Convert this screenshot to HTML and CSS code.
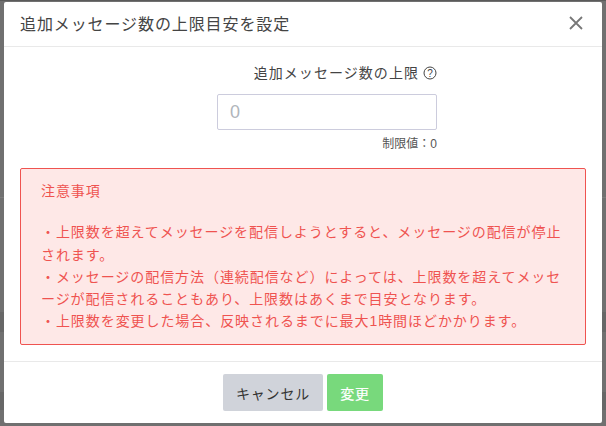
FILE: index.html
```html
<!DOCTYPE html>
<html lang="ja">
<head>
  <meta charset="utf-8">
  <title>追加メッセージ数の上限目安を設定</title>
  <link rel="stylesheet" href="styles.css">
</head>
<body>
  <div class="modal">
    <div class="modal-header">
      <h2 class="modal-title">追加メッセージ数の上限目安を設定</h2>
      <svg class="close-icon" width="16" height="16" viewBox="0 0 16 16"><path d="M2 2 L14 14 M14 2 L2 14" /></svg>
    </div>
    <div class="modal-body">
      <div class="limit-form">
        <label class="limit-label">追加メッセージ数の上限
          <svg class="help-icon" width="14" height="14" viewBox="0 0 14 14"><circle cx="7" cy="7" r="6" /><text x="7" y="10.5">?</text></svg>
        </label>
        <input class="limit-input" type="text" placeholder="0">
        <div class="limit-note">制限値：0</div>
      </div>
      <div class="notice">
        <p class="notice-title">注意事項</p>
        <p>・上限数を超えてメッセージを配信しようとすると、メッセージの配信が停止されます。<br>・メッセージの配信方法（連続配信など）によっては、上限数を超えてメッセージが配信されることもあり、上限数はあくまで目安となります。<br>・上限数を変更した場合、反映されるまでに最大1時間ほどかかります。</p>
      </div>
    </div>
    <div class="modal-footer">
      <button class="btn btn-cancel">キャンセル</button>
      <button class="btn btn-save">変更</button>
    </div>
  </div>
</body>
</html>
```

FILE: styles.css
```css
html, body {
  margin: 0;
  height: 426px;
  overflow: hidden;
}
body {
  background-color: #707070;
  background-image: linear-gradient(to bottom,
    #5a5a5a 0, #5a5a5a 1px,
    #707070 1px, #707070 197px,
    #7c7c7c 197px, #7c7c7c 198px,
    #707070 198px, #707070 312px,
    #676767 312px, #676767 332px,
    #707070 332px, #707070 392px,
    #676767 392px, #676767 410px,
    #707070 410px);
  font-family: "Liberation Sans", "Noto Sans CJK JP", sans-serif;
  color: #333;
  padding: 2px 4px 3px;
  box-sizing: border-box;
}
.modal {
  background-color: #fff;
  height: 421px;
  border-radius: 2px;
  display: flex;
  flex-direction: column;
}
.modal-header {
  height: 45px;
  box-sizing: border-box;
  padding: 0 18px 2px 16px;
  border-bottom: 1px solid #e9e9e9;
  display: flex;
  align-items: center;
  justify-content: space-between;
}
.modal-title {
  margin: 0;
  font-size: 16px;
  font-weight: normal;
  letter-spacing: 0.9px;
  color: #444;
}
.close-icon path {
  stroke: #777;
  stroke-width: 1.8;
  fill: none;
}
.modal-body {
  flex: 1;
  padding: 0 16px;
}
.limit-form {
  width: 417px;
  margin-top: 15px;
  display: flex;
  flex-direction: column;
  align-items: flex-end;
}
.limit-label {
  font-size: 14px;
  letter-spacing: 1.05px;
  color: #444;
  display: flex;
  align-items: center;
  gap: 4px;
  height: 20px;
}
.help-icon {
  margin-top: 1px;
}
.help-icon circle {
  fill: none;
  stroke: #444;
}
.help-icon text {
  font-size: 10px;
  letter-spacing: 0;
  text-anchor: middle;
  fill: #444;
}
.limit-input {
  width: 220px;
  height: 36px;
  margin-top: 12px;
  box-sizing: border-box;
  padding: 0 12px;
  border: 1px solid #ccd;
  border-radius: 2px;
  font-size: 18px;
}
.limit-input::placeholder {
  color: #b0b5bb;
}
.limit-note {
  font-size: 12px;
  color: #555;
  margin-top: 4px;
}
.notice {
  margin-top: 17px;
  height: 177px;
  box-sizing: border-box;
  padding: 11px 21px 11px 20px;
  background-color: #fee8e7;
  border: 1px solid #ef5350;
  border-radius: 2px;
  color: #ef5350;
  font-size: 14px;
  letter-spacing: 0.93px;
  line-height: 22.3px;
}
.notice p {
  margin: 0;
}
.notice .notice-title {
  margin-bottom: 19px;
}
.modal-footer {
  height: 62px;
  border-top: 1px solid #e9e9e9;
  display: flex;
  justify-content: center;
  align-items: flex-start;
  gap: 4px;
  padding-top: 12px;
  box-sizing: border-box;
}
.btn {
  height: 37px;
  border: none;
  border-radius: 2px;
  font-size: 14px;
  letter-spacing: 0.8px;
  font-family: inherit;
}
.btn-cancel {
  width: 100px;
  background-color: #d0d3da;
  color: #333;
}
.btn-save {
  width: 56px;
  background-color: #78d97c;
  color: #fff;
  -webkit-text-stroke: 0.2px #fff;
}
```
